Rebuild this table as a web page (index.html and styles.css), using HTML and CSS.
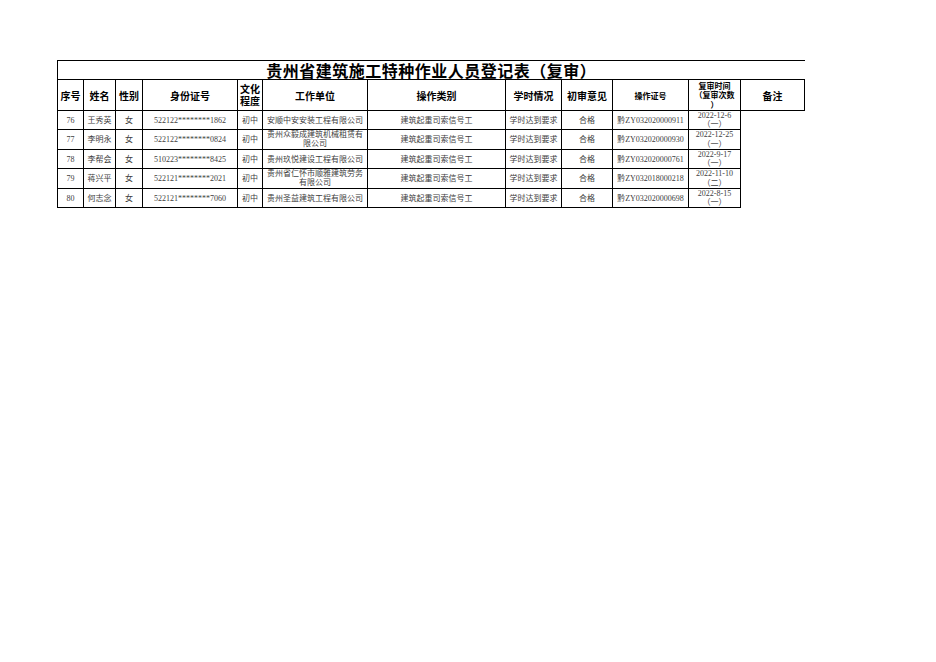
FILE: index.html
```html
<!DOCTYPE html>
<html lang="zh-CN">
<head>
<meta charset="utf-8">
<title>贵州省建筑施工特种作业人员登记表（复审）</title>
<link rel="stylesheet" href="styles.css">
</head>
<body>
<div class="page">
<table class="sheet">
  <colgroup>
    <col class="c-no"><col class="c-name"><col class="c-sex"><col class="c-id"><col class="c-edu"><col class="c-unit"><col class="c-type"><col class="c-hours"><col class="c-op"><col class="c-cert"><col class="c-date"><col class="c-note">
  </colgroup>
  <tr class="r-title"><td class="title" colspan="12">贵州省建筑施工特种作业人员登记表（复审）</td></tr>
  <tr class="r-head">
    <th>序号</th><th>姓名</th><th>性别</th><th>身份证号</th><th class="edu">文化<br>程度</th><th>工作单位</th><th>操作类别</th><th>学时情况</th><th>初审意见</th><th class="small">操作证号</th><th class="small tight">复审时间<br>（复审次数<br>）</th><th>备注</th>
  </tr>
  <tr class="r-data">
    <td>76</td><td>王秀英</td><td>女</td><td>522122********1862</td><td>初中</td><td>安顺中安安装工程有限公司</td><td>建筑起重司索信号工</td><td>学时达到要求</td><td>合格</td><td>黔ZY032020000911</td><td class="date"><div class="dbox">2022-12-6<br>（一）</div></td><td class="note"></td>
  </tr>
  <tr class="r-data r-b">
    <td>77</td><td>李明永</td><td>女</td><td>522122********0824</td><td>初中</td><td class="wrap"><div class="wbox">贵州众毅成建筑机械租赁有<br>限公司</div></td><td>建筑起重司索信号工</td><td>学时达到要求</td><td>合格</td><td>黔ZY032020000930</td><td class="date"><div class="dbox">2022-12-25<br>（一）</div></td><td class="note"></td>
  </tr>
  <tr class="r-data">
    <td>78</td><td>李帮会</td><td>女</td><td>510223********8425</td><td>初中</td><td>贵州玖悦建设工程有限公司</td><td>建筑起重司索信号工</td><td>学时达到要求</td><td>合格</td><td>黔ZY032020000761</td><td class="date"><div class="dbox">2022-9-17<br>（一）</div></td><td class="note"></td>
  </tr>
  <tr class="r-data r-b">
    <td>79</td><td>蒋兴平</td><td>女</td><td>522121********2021</td><td>初中</td><td class="wrap"><div class="wbox">贵州省仁怀市顺雅建筑劳务<br>有限公司</div></td><td>建筑起重司索信号工</td><td>学时达到要求</td><td>合格</td><td>黔ZY032018000218</td><td class="date"><div class="dbox">2022-11-10<br>（二）</div></td><td class="note"></td>
  </tr>
  <tr class="r-data">
    <td>80</td><td>何志念</td><td>女</td><td>522121********7060</td><td>初中</td><td>贵州圣益建筑工程有限公司</td><td>建筑起重司索信号工</td><td>学时达到要求</td><td>合格</td><td>黔ZY032020000698</td><td class="date"><div class="dbox">2022-8-15<br>（一）</div></td><td class="note"></td>
  </tr>
</table>
</div>
</body>
</html>
```

FILE: styles.css
```css
html, body {
  margin: 0;
  padding: 0;
  background: #ffffff;
}

.page {
  padding: 60px 0 0 57px;
}

.sheet {
  border-collapse: collapse;
  table-layout: fixed;
  width: 747px;
  font-family: "Liberation Serif", "Noto Sans CJK SC", serif;
  color: #404040;
}

.c-no { width: 26px; }
.c-name { width: 32px; }
.c-sex { width: 27px; }
.c-id { width: 95px; }
.c-edu { width: 25px; }
.c-unit { width: 105px; }
.c-type { width: 138px; }
.c-hours { width: 56px; }
.c-op { width: 51px; }
.c-cert { width: 76px; }
.c-date { width: 52px; }
.c-note { width: 64px; }

.sheet td, .sheet th {
  border: 1px solid #000;
  padding: 0;
  text-align: center;
  vertical-align: middle;
  overflow: hidden;
}

.r-title { height: 19px; }
.sheet td.title {
  border-right: none;
  border-bottom: 1px solid #000;
  font-family: "Noto Sans CJK SC", sans-serif;
  font-weight: 700;
  font-size: 16px;
  letter-spacing: 0.5px;
  line-height: 18px;
  color: #000;
  vertical-align: bottom;
  overflow: visible;
  white-space: nowrap;
}

.r-head { height: 31px; }
.r-head th {
  font-family: "Noto Sans CJK SC", sans-serif;
  font-weight: 700;
  font-size: 10px;
  line-height: 11px;
  color: #000;
}
.r-head th.edu {
  line-height: 12px;
}
.r-head th.small {
  font-size: 8px;
}
.r-head th.tight {
  font-size: 8px;
  line-height: 9.5px;
}

.r-data { height: 19px; }
.r-data.r-b { height: 20px; }
.r-data td {
  font-size: 8px;
  line-height: 9px;
  white-space: nowrap;
}

.wbox, .dbox {
  height: 17px;
  display: flex;
  flex-direction: column;
  justify-content: center;
  overflow: visible;
}
.wbox {
  line-height: 8.5px;
}
.dbox {
  line-height: 9.5px;
}

.r-data td.note {
  border-top: none;
  border-bottom: none;
  border-right: none;
}
```
